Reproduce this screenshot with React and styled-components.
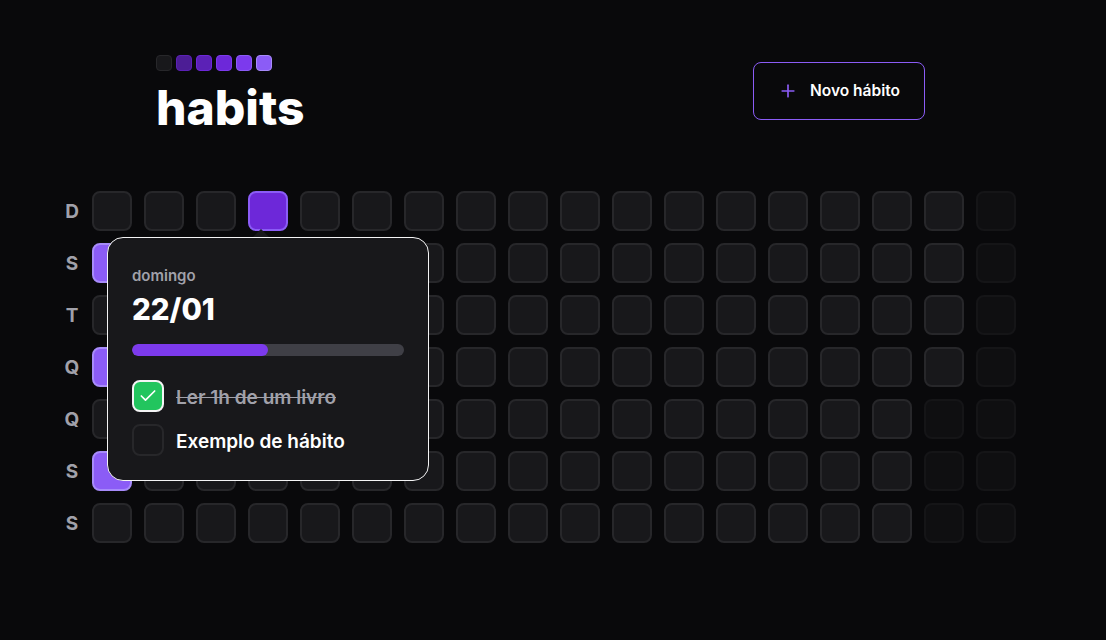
import React from 'react';
import styled, { createGlobalStyle } from 'styled-components';
import { Plus, Check } from 'lucide-react';

const GlobalStyle = createGlobalStyle`
  body {
    margin: 0;
    background: #09090b;
    color: #ffffff;
    font-family: Inter, "Noto Sans", sans-serif;
    -webkit-font-smoothing: antialiased;
  }
`;

const weekDays = ['D', 'S', 'T', 'Q', 'Q', 'S', 'S'];
const COLUMNS = 18;
const TODAY = 16 * 7 + 3;
const done = { 1: 'light', 3: 'light', 5: 'light', 21: 'strong' };

const logoSteps = [
  ['#18181b', '#27272a'],
  ['#4c1d95', '#5b21b6'],
  ['#5b21b6', '#6d28d9'],
  ['#6d28d9', '#7c3aed'],
  ['#7c3aed', '#8b5cf6'],
  ['#8b5cf6', '#a78bfa'],
];

function App() {
  const cells = Array.from({ length: COLUMNS * 7 }, (_, i) => i);

  return (
    <Page>
      <GlobalStyle />
      <Container>
        <Header>
          <Brand>
            <Logo>
              {logoSteps.map(([bg, border], i) => (
                <LogoSquare key={i} $bg={bg} $border={border} />
              ))}
            </Logo>
            <Title>habits</Title>
          </Brand>
          <NewButton type="button">
            <Plus size={20} color="#8b5cf6" strokeWidth={2} />
            Novo hábito
          </NewButton>
        </Header>

        <Summary>
          <WeekDays>
            {weekDays.map((d, i) => (
              <WeekDay key={i}>{d}</WeekDay>
            ))}
          </WeekDays>

          <GridArea>
            <Cells>
              {cells.map((i) => (
                <Cell
                  key={i}
                  $state={i > TODAY ? 'future' : done[i] || 'empty'}
                />
              ))}
            </Cells>

            <Popover>
              <Arrow width="16" height="8" viewBox="0 0 16 8">
                <polygon points="0,8 8,0 16,8" fill="#18181b" />
              </Arrow>
              <DayName>domingo</DayName>
              <DayDate>22/01</DayDate>
              <Progress>
                <ProgressFill style={{ width: '50%' }} />
              </Progress>
              <HabitList>
                <HabitRow>
                  <Box $checked>
                    <Check size={20} color="#ffffff" strokeWidth={2} />
                  </Box>
                  <HabitTitle $checked>Ler 1h de um livro</HabitTitle>
                </HabitRow>
                <HabitRow>
                  <Box />
                  <HabitTitle>Exemplo de hábito</HabitTitle>
                </HabitRow>
              </HabitList>
            </Popover>
          </GridArea>
        </Summary>
      </Container>
    </Page>
  );
}

export default App;

const Page = styled.div`
  min-height: 640px;
  padding-top: 55px;
  box-sizing: border-box;
`;

const Container = styled.div`
  width: 964px;
  margin-left: 52px;
  display: flex;
  flex-direction: column;
`;

const Header = styled.header`
  width: 768px;
  margin-left: 104px;
  display: flex;
  justify-content: space-between;
  align-items: flex-start;
`;

const Brand = styled.div`
  display: flex;
  flex-direction: column;
  gap: 13px;
`;

const Logo = styled.div`
  display: flex;
  gap: 4px;
`;

const LogoSquare = styled.span`
  width: 16px;
  height: 16px;
  box-sizing: border-box;
  border-radius: 4px;
  background: ${(p) => p.$bg};
  border: 1px solid ${(p) => p.$border};
`;

const Title = styled.h1`
  margin: 0;
  font-size: 48px;
  line-height: 48px;
  font-weight: 800;
  color: #ffffff;
`;

const NewButton = styled.button`
  margin-top: 7px;
  margin-right: -1px;
  display: flex;
  align-items: center;
  gap: 12px;
  padding: 16px 24px;
  background: transparent;
  border: 1px solid #8b5cf6;
  border-radius: 8px;
  color: #ffffff;
  font-family: Inter, sans-serif;
  font-size: 15.5px;
  line-height: 24px;
  font-weight: 600;
  cursor: pointer;
`;

const Summary = styled.section`
  margin-top: 59px;
  display: flex;
`;

const WeekDays = styled.div`
  display: grid;
  grid-template-rows: repeat(7, 40px);
  gap: 12px;
`;

const WeekDay = styled.div`
  width: 40px;
  height: 40px;
  display: flex;
  align-items: center;
  justify-content: center;
  color: #a1a1aa;
  font-size: 19px;
  font-weight: 700;
`;

const GridArea = styled.div`
  position: relative;
`;

const Cells = styled.div`
  display: grid;
  grid-template-rows: repeat(7, 40px);
  grid-auto-flow: column;
  grid-auto-columns: 40px;
  gap: 12px;
`;

const cellColors = {
  empty: ['#18181b', '#27272a', 1],
  future: ['#18181b', '#27272a', 0.4],
  light: ['#8b5cf6', '#a78bfa', 1],
  strong: ['#6d28d9', '#8b5cf6', 1],
};

const Cell = styled.div`
  width: 40px;
  height: 40px;
  box-sizing: border-box;
  border-radius: 8px;
  background: ${(p) => cellColors[p.$state][0]};
  border: 2px solid ${(p) => cellColors[p.$state][1]};
  opacity: ${(p) => cellColors[p.$state][2]};
`;

const Popover = styled.div`
  position: absolute;
  left: 15px;
  top: 46px;
  width: 322px;
  box-sizing: border-box;
  padding: 24px;
  background: #18181b;
  border: 1px solid #f4f4f5;
  border-radius: 16px;
  display: flex;
  flex-direction: column;
`;

const Arrow = styled.svg`
  position: absolute;
  top: -9px;
  left: 145px;
`;

const DayName = styled.span`
  margin-top: 2px;
  color: #a1a1aa;
  font-size: 15px;
  line-height: 24px;
  font-weight: 600;
`;

const DayDate = styled.span`
  margin-top: 3px;
  font-size: 29.5px;
  line-height: 37px;
  font-weight: 800;
  color: #ffffff;
`;

const Progress = styled.div`
  margin-top: 16px;
  height: 12px;
  border-radius: 8px;
  background: #3f3f46;
  overflow: hidden;
`;

const ProgressFill = styled.div`
  height: 100%;
  border-radius: 8px;
  background: #7c3aed;
`;

const HabitList = styled.div`
  margin-top: 24px;
  display: flex;
  flex-direction: column;
  gap: 12px;
`;

const HabitRow = styled.div`
  display: flex;
  align-items: center;
  gap: 12px;
`;

const Box = styled.div`
  width: 32px;
  height: 32px;
  box-sizing: border-box;
  border-radius: 8px;
  display: flex;
  align-items: center;
  justify-content: center;
  background: ${(p) => (p.$checked ? '#22c55e' : '#18181b')};
  border: 2px solid ${(p) => (p.$checked ? '#f4f4f5' : '#27272a')};
`;

const HabitTitle = styled.span`
  padding-top: 3px;
  font-size: 19px;
  line-height: 28px;
  font-weight: 600;
  color: ${(p) => (p.$checked ? '#a1a1aa' : '#ffffff')};
  text-decoration: ${(p) => (p.$checked ? 'line-through' : 'none')};
`;
